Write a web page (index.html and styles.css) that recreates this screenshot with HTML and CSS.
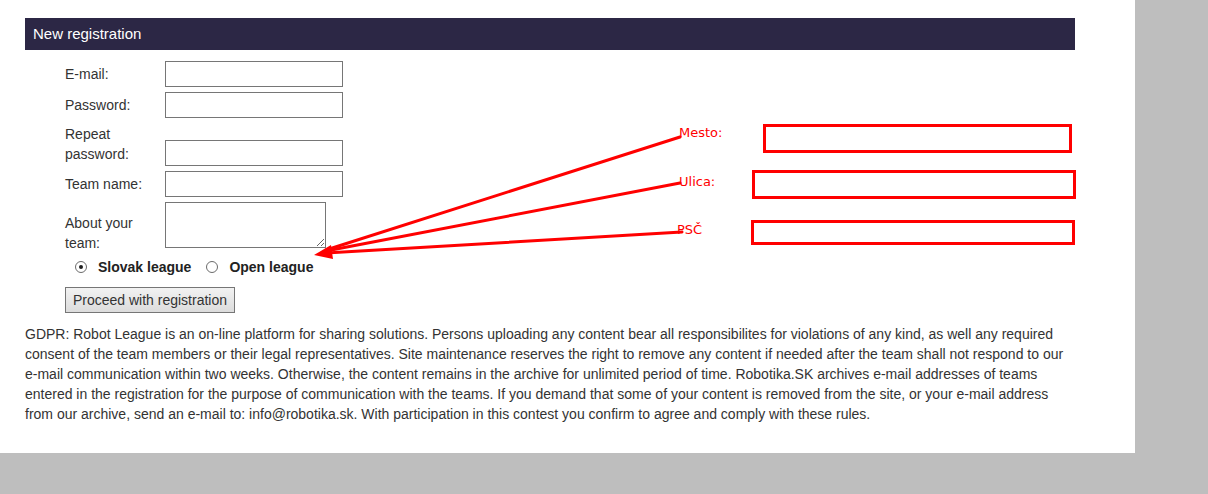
FILE: index.html
```html
<!DOCTYPE html>
<html>
<head>
<meta charset="utf-8">
<title>New registration</title>
<link rel="stylesheet" href="styles.css">
</head>
<body>
<div class="page">
  <div class="content">
    <h2 class="bar">New registration</h2>
    <form class="reg">
      <div class="fields">
        <label class="lbl">E-mail:</label>
        <input class="txt" type="text">
        <label class="lbl">Password:</label>
        <input class="txt" type="password">
        <label class="lbl lbl-top">Repeat<br>password:</label>
        <input class="txt txt-end" type="password">
        <label class="lbl">Team name:</label>
        <input class="txt" type="text">
        <label class="lbl lbl-about">About your<br>team:</label>
        <textarea class="area"></textarea>
      </div>
      <div class="leagues">
        <label class="opt"><input class="radio" type="radio" name="league" checked><span>Slovak league</span></label>
        <label class="opt"><input class="radio" type="radio" name="league"><span>Open league</span></label>
      </div>
      <button class="btn" type="button">Proceed with registration</button>
    </form>
    <p class="gdpr">GDPR: Robot League is an on-line platform for sharing solutions. Persons uploading any content bear all responsibilites for violations of any kind, as well any required consent of the team members or their legal representatives. Site maintenance reserves the right to remove any content if needed after the team shall not respond to our e-mail communication within two weeks. Otherwise, the content remains in the archive for unlimited period of time. Robotika.SK archives e-mail addresses of teams entered in the registration for the purpose of communication with the teams. If you demand that some of your content is removed from the site, or your e-mail address from our archive, send an e-mail to: info@robotika.sk. With participation in this contest you confirm to agree and comply with these rules.</p>
  </div>
</div>
<svg class="annot" width="1208" height="494" viewBox="0 0 1208 494">
  <g fill="none" stroke="#ff0000" stroke-width="3">
    <rect x="764.5" y="125.5" width="306" height="26"/>
    <rect x="753.5" y="171.5" width="321" height="26"/>
    <rect x="752.5" y="221.5" width="321" height="22"/>
  </g>
  <g stroke="#ff0000" stroke-width="3" stroke-linecap="round">
    <line x1="680" y1="137" x2="326" y2="250"/>
    <line x1="680" y1="183" x2="326" y2="251"/>
    <line x1="682" y1="232" x2="326" y2="253"/>
  </g>
  <polygon points="314,255 331,245 333,259" fill="#ff0000"/>
  <g class="annot-text" fill="#ff0000">
    <text x="679" y="137">Mesto:</text>
    <text x="679" y="186">Ulica:</text>
    <text x="677" y="234">PSČ</text>
  </g>
</svg>
</body>
</html>
```
FILE: styles.css
```css
html, body {
  margin: 0;
  padding: 0;
}
body {
  background: #bebebe;
  font-family: "Liberation Sans", Arial, sans-serif;
  font-size: 14px;
  color: #333333;
  position: relative;
  width: 1208px;
  height: 494px;
  overflow: hidden;
}
.page {
  background: #ffffff;
  width: 1135px;
  height: 453px;
  box-sizing: border-box;
  padding: 18px 0 0 25px;
}
.content {
  width: 1050px;
}
.bar {
  margin: 0;
  height: 32px;
  line-height: 32px;
  background: #2c2745;
  color: #ffffff;
  font-size: 15px;
  font-weight: normal;
  padding-left: 8px;
}
.reg {
  margin: 11px 0 0 40px;
}
.fields {
  display: grid;
  grid-template-columns: 100px auto;
  row-gap: 5px;
  align-items: center;
  justify-items: start;
}
.lbl {
  line-height: 20px;
  color: #333333;
}
.lbl-top {
  align-self: start;
  margin-top: 1px;
}
.lbl-about {
  align-self: start;
  margin: 11px 0 -5px 0;
}
.txt {
  box-sizing: border-box;
  width: 178px;
  height: 26px;
  margin: 0;
  border: 1px solid #767676;
  border-radius: 0;
  background: #ffffff;
  padding: 2px 3px;
  font-family: "Liberation Sans", Arial, sans-serif;
  font-size: 14px;
}
.txt.txt-end {
  align-self: end;
  margin-top: 17px;
}
.area {
  box-sizing: border-box;
  align-self: start;
  width: 161px;
  height: 46px;
  margin: 0;
  border: 1px solid #767676;
  border-radius: 0;
  padding: 2px;
  display: block;
  font-family: "Liberation Sans", Arial, sans-serif;
  font-size: 14px;
}
.leagues {
  display: flex;
  align-items: center;
  margin-top: 9px;
  height: 20px;
  font-weight: bold;
  color: #222222;
}
.opt {
  display: flex;
  align-items: center;
  line-height: 20px;
}
.opt + .opt {
  margin-left: 15px;
}
.radio {
  appearance: none;
  -webkit-appearance: none;
  box-sizing: border-box;
  width: 12px;
  height: 12px;
  margin: 0 11px 0 10px;
  border: 1px solid #6b6b6b;
  border-radius: 50%;
  background: #ffffff;
  display: flex;
  align-items: center;
  justify-content: center;
}
.opt + .opt .radio {
  margin-left: 0;
}
.radio:checked::after {
  content: "";
  width: 4px;
  height: 4px;
  border-radius: 50%;
  background: #1e1e1e;
}
.btn {
  display: block;
  margin-top: 10px;
  box-sizing: border-box;
  width: 170px;
  height: 26px;
  padding: 0;
  border: 1px solid #767676;
  border-radius: 0;
  background: linear-gradient(#f2f2f2, #dcdcdc);
  color: #333333;
  font-family: "Liberation Sans", Arial, sans-serif;
  font-size: 14px;
}
.gdpr {
  margin: 11px 0 0 0;
  line-height: 20px;
  color: #333333;
}
.annot {
  position: absolute;
  left: 0;
  top: 0;
  pointer-events: none;
}
.annot-text {
  font-family: "DejaVu Sans", sans-serif;
  font-size: 13px;
}
```
